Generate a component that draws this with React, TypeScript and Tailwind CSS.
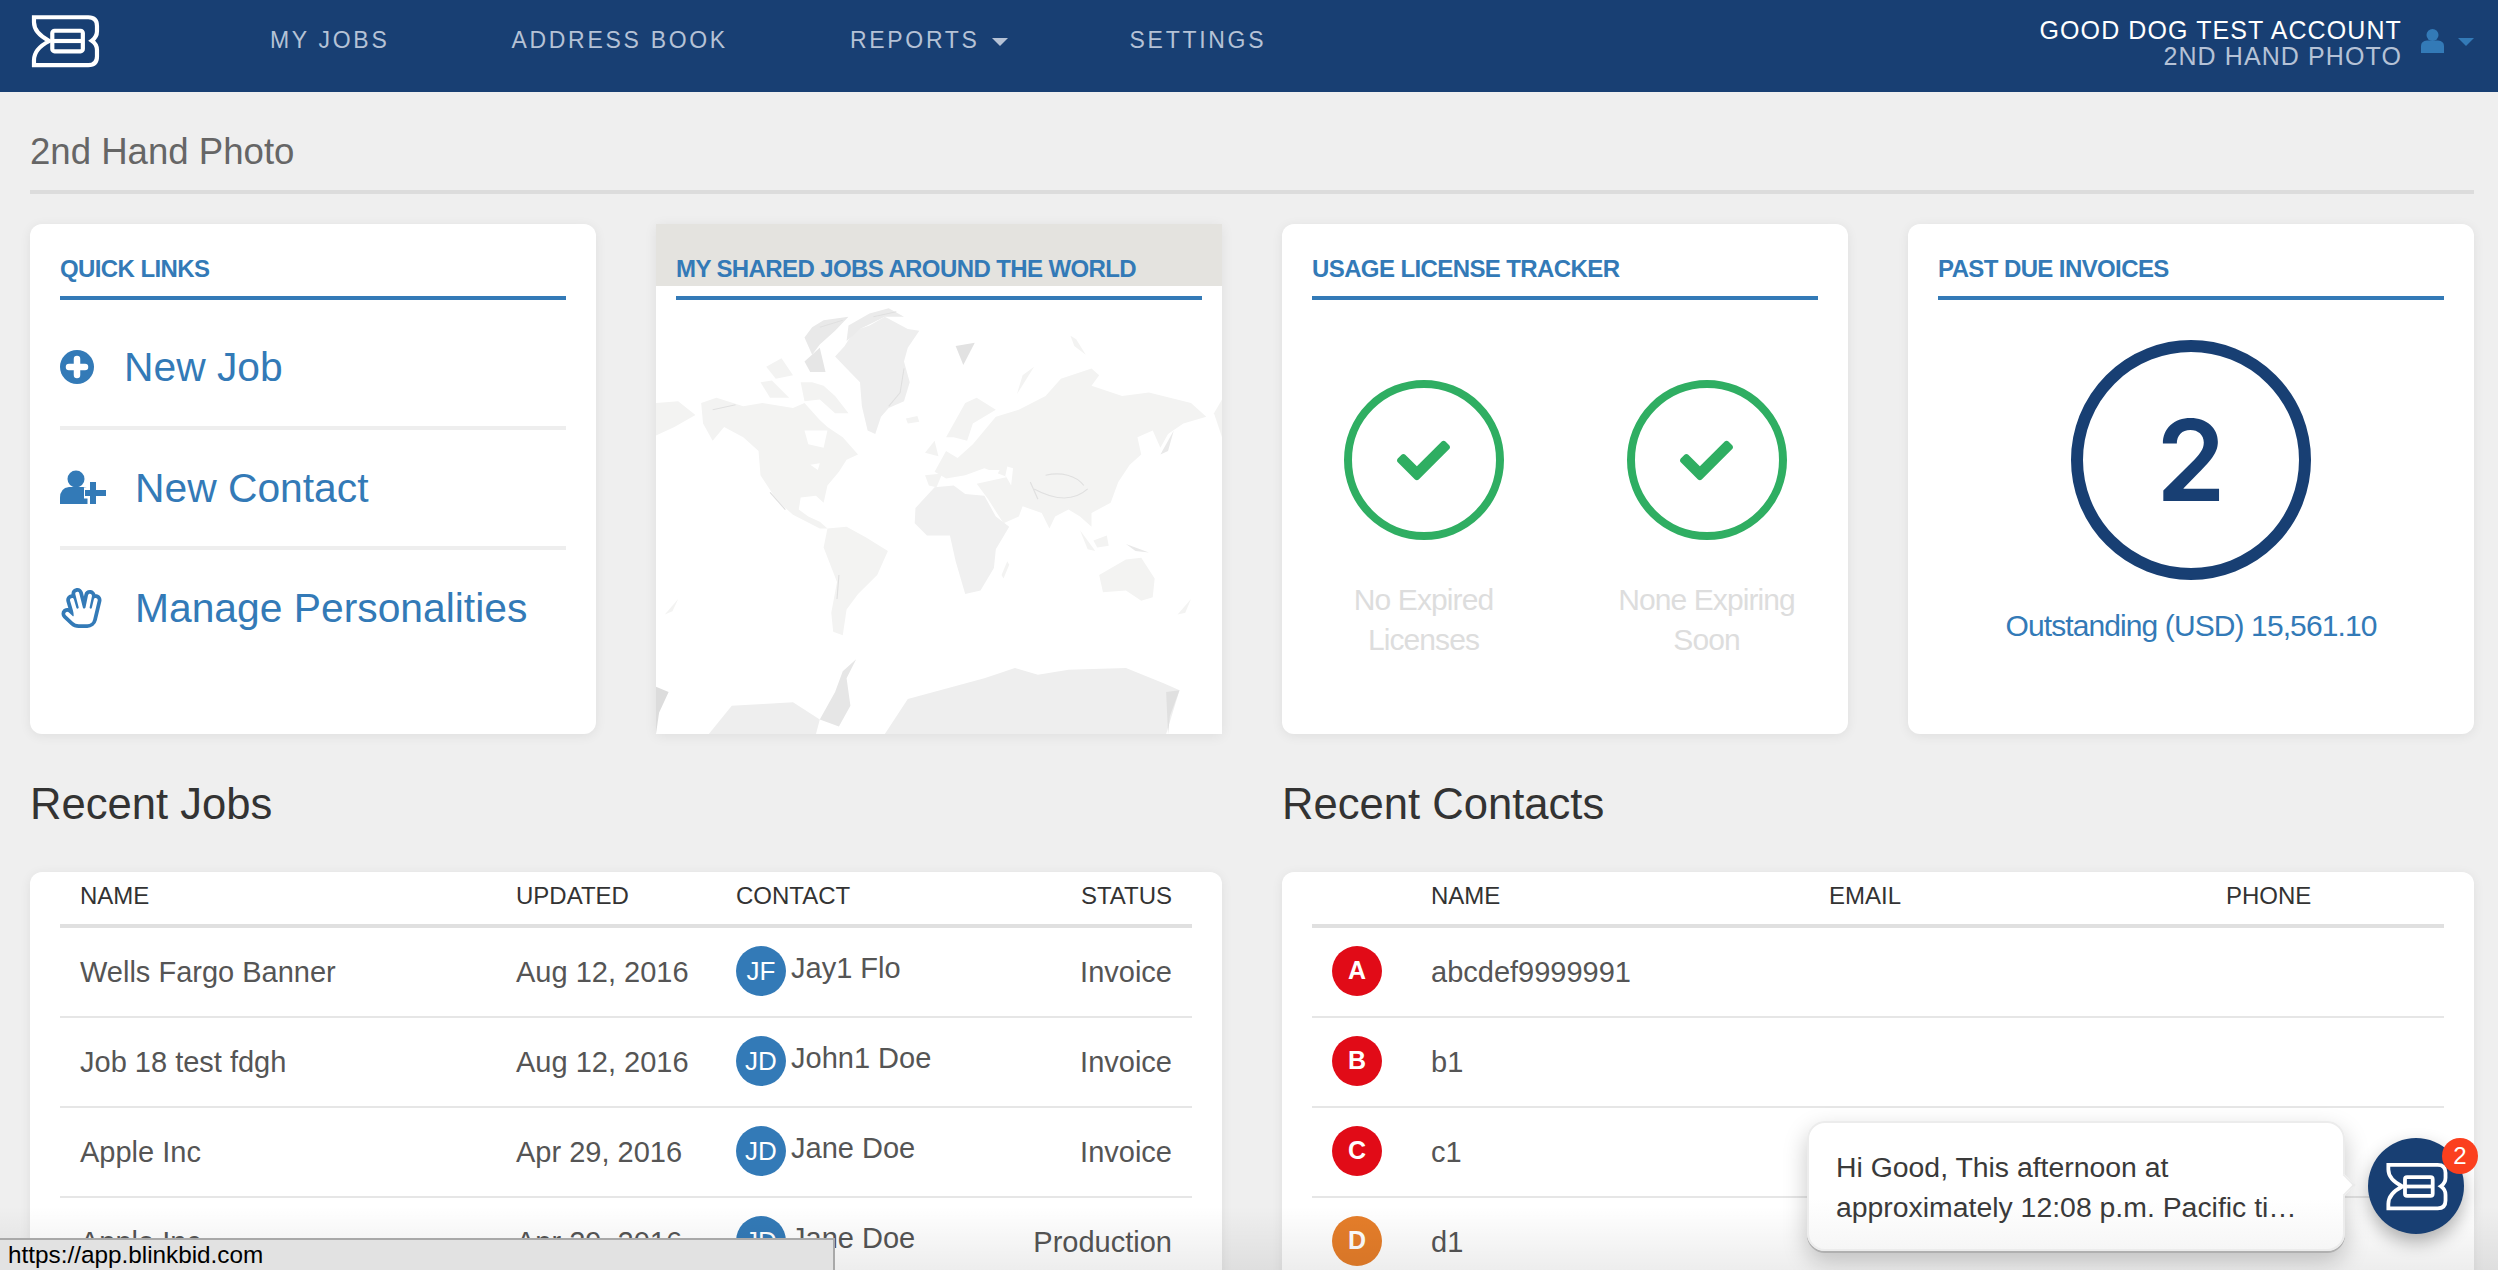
import { FaCheck, FaRegHandSpock } from "react-icons/fa";

function Logo({ className }: { className: string }) {
  return (
    <svg viewBox="25 8 215 168" className={className} fill="none" stroke="white" strokeWidth="13">
      <path d="M36 18H205Q232 18 232 45V62Q232 80 216 91Q232 102 232 120V140Q232 167 205 167H36V152Q36 116 84 92Q36 68 36 34Z" />
      <rect x="93" y="60" width="95" height="64" rx="7" />
      <path d="M93 92H188" />
    </svg>
  );
}

function PlusCircle() {
  return (
    <svg viewBox="0 0 34 34" className="w-[34px] h-[34px] shrink-0">
      <circle cx="17" cy="17" r="17" fill="#337ab7" />
      <path d="M17 9V25M9 17H25" stroke="white" strokeWidth="6.5" strokeLinecap="round" />
    </svg>
  );
}

function UserPlus() {
  return (
    <svg viewBox="0 0 46 36" className="w-[46px] h-[36px] shrink-0">
      <circle cx="16" cy="9" r="8.5" fill="#337ab7" />
      <path d="M0 34V28Q0 18 9 17H23Q30 18 32 24V34Z" fill="#337ab7" />
      <path d="M33 11V35M24 23H46" stroke="white" strokeWidth="11" />
      <path d="M33 12V34M25 23H46" stroke="#337ab7" strokeWidth="6" />
    </svg>
  );
}

function CardTitle({ children }: { children: string }) {
  return (
    <div className="mx-[30px] pt-[30px] pb-[12px] border-b-4 border-[#337ab7] text-[24px] leading-[30px] font-bold tracking-[-0.6px] text-[#337ab7]">
      {children}
    </div>
  );
}

function QuickLink({ icon, label, className }: { icon: React.ReactNode; label: string; className: string }) {
  return (
    <div className={`flex items-center text-[40.8px] text-[#337ab7] ${className}`}>
      {icon}
      <span className="mt-[2px]">{label}</span>
    </div>
  );
}

function Check() {
  return (
    <div className="w-[160px] h-[160px] rounded-full border-8 border-[#2fae62] flex items-center justify-center">
      <FaCheck className="w-[53px] h-[53px] text-[#2fae62]" />
    </div>
  );
}

// coordinates are traced off the map picture, hence the odd viewBox
function WorldMap() {
  return (
    <svg viewBox="42 261 1479 1261" preserveAspectRatio="none" className="block w-full h-[434px]">
      <defs>
        <filter id="soft" x="-5%" y="-5%" width="110%" height="110%">
          <feGaussianBlur stdDeviation="2" />
        </filter>
      </defs>
      <g fill="#f3f3f2" filter="url(#soft)">
        <path d="M510,425 L535,395 L560,350 L600,335 L640,310 L700,345 L730,350 L700,400 L690,440 L705,500 L690,555 L650,575 L630,600 L615,650 L595,640 L580,570 L575,500 L540,460 Z" fill="#eeeeee" />
        <path d="M430,370 L450,340 L480,320 L545,310 L510,350 L470,390 L450,420 Z" fill="#e9e9e9" />
        <path d="M545,335 L600,300 L650,285 L690,310 L640,310 L575,345 L540,380 Z" fill="#ebebeb" />
        <path d="M315,500 L345,495 L390,545 L340,545 Z" />
        <path d="M330,455 L370,430 L400,480 L355,490 Z" />
        <path d="M420,500 L450,500 L480,510 L510,540 L545,590 L510,590 L470,550 L430,555 Z" />
        <path d="M430,440 L470,400 L485,470 L445,470 Z" fill="#e6e6e6" />
        <path d="M160,560 L200,545 L270,570 L320,560 L400,575 L430,560 L470,610 L490,630 L530,660 L570,710 L540,725 L520,760 L490,800 L480,850 L460,830 L420,835 L415,870 L440,890 L470,905 L490,925 L470,925 L400,885 L375,860 L350,830 L315,770 L310,700 L270,660 L220,630 L190,670 L165,620 Z" />
        <path d="M490,925 L540,920 L590,950 L648,990 L620,1060 L570,1115 L540,1160 L530,1235 L505,1225 L500,1170 L515,1080 L480,980 Z" />
        <path d="M720,865 L770,805 L820,800 L850,825 L900,830 L930,890 L965,920 L930,985 L925,1040 L890,1105 L850,1115 L825,1020 L810,945 L750,945 L718,910 Z" fill="#f0f0f0" />
        <path d="M770,760 L800,700 L830,720 L870,680 L930,600 L990,580 L1060,540 L1100,490 L1180,460 L1200,480 L1180,510 L1260,540 L1330,530 L1440,560 L1480,600 L1420,620 L1380,650 L1360,690 L1340,640 L1300,660 L1310,710 L1280,740 L1250,790 L1230,850 L1180,880 L1180,920 L1150,890 L1120,870 L1085,890 L1070,925 L1050,880 L1000,860 L990,890 L950,910 L910,840 L880,795 L960,775 L900,750 L850,770 L800,780 Z" />
        <path d="M800,660 L850,560 L880,545 L930,580 L870,620 L855,670 L820,660 Z" />
        <path d="M745,705 L770,670 L780,715 Z" />
        <path d="M695,605 L725,598 L730,615 L700,620 Z" />
        <path d="M745,770 L790,765 L775,805 L755,800 Z" />
        <path d="M1150,930 L1190,990 L1170,985 Z" />
        <path d="M1185,960 L1220,945 L1225,975 L1195,980 Z" />
        <path d="M1270,970 L1330,995 L1295,990 Z" fill="#e9e9e9" />
        <path d="M1200,1060 L1270,1015 L1310,1010 L1345,1070 L1340,1125 L1310,1135 L1270,1105 L1210,1110 Z" />
        <path d="M945,1060 L960,1020 L965,1030 L950,1070 Z" />
        <path d="M1405,1175 L1440,1130 L1425,1170 Z" />
        <path d="M65,1175 L100,1130 L85,1165 Z" />
        <path d="M1360,710 L1395,640 L1380,700 Z" fill="#e9e9e9" />
        <path d="M42,560 L100,555 L145,595 L90,630 L42,655 Z" />
        <path d="M1500,590 L1521,550 L1521,660 Z" />
        <path d="M825,395 L875,385 L845,450 Z" fill="#e2e2e2" />
        <path d="M985,535 L1030,455 L1000,480 Z" />
        <path d="M1125,365 L1140,375 L1165,420 L1135,395 Z" />
        <path d="M640,1522 L700,1420 L900,1360 L980,1330 L1040,1350 L1120,1335 L1270,1330 L1370,1375 L1410,1395 L1375,1522 Z" fill="#eeeeee" />
        <path d="M180,1522 L240,1440 L400,1430 L470,1480 L460,1522 Z" fill="#eeeeee" />
        <path d="M470,1480 L510,1400 L530,1340 L565,1305 L540,1360 L550,1440 L520,1500 Z" fill="#e6e6e6" />
        <path d="M42,1385 L75,1400 L50,1460 L42,1522 Z" fill="#dcdcdc" />
        <path d="M1375,1400 L1410,1395 L1385,1470 L1380,1522 Z" fill="#e0e0e0" />
      </g>
      <g fill="white">
        <path d="M430,640 L490,640 L480,690 L440,680 Z" />
        <path d="M445,740 L470,735 L465,755 Z" />
        <path d="M960,745 L975,750 L970,800 L955,770 Z" />
        <path d="M885,755 L940,755 L930,775 L890,780 Z" />
      </g>
      <g fill="none" stroke="#e0e0e0" strokeWidth="3" filter="url(#soft)">
        <path d="M1030,810 C1080,840 1130,850 1170,810" />
        <path d="M1060,770 C1100,760 1140,770 1160,800" />
        <path d="M520,1060 L515,1130" />
        <path d="M690,460 L680,530 L650,570" />
        <path d="M190,580 L250,565" />
        <path d="M340,820 L380,870" />
        <path d="M470,340 L530,320" />
        <path d="M610,310 L670,295" />
        <path d="M1020,790 L1040,840" />
      </g>
    </svg>
  );
}

const jobs = [
  { name: "Wells Fargo Banner", updated: "Aug 12, 2016", initials: "JF", contact: "Jay1 Flo", status: "Invoice" },
  { name: "Job 18 test fdgh", updated: "Aug 12, 2016", initials: "JD", contact: "John1 Doe", status: "Invoice" },
  { name: "Apple Inc", updated: "Apr 29, 2016", initials: "JD", contact: "Jane Doe", status: "Invoice" },
  { name: "Apple Inc", updated: "Apr 29, 2016", initials: "JD", contact: "Jane Doe", status: "Production" },
];

const contacts = [
  { letter: "A", name: "abcdef9999991", color: "bg-[#e10b17]" },
  { letter: "B", name: "b1", color: "bg-[#e10b17]" },
  { letter: "C", name: "c1", color: "bg-[#e10b17]" },
  { letter: "D", name: "d1", color: "bg-[#e67e2a]" },
];

const headCell = "text-[24px] text-[#333]";
const cardClass = "bg-white rounded-xl shadow-[0_2px_12px_rgba(0,0,0,0.07)] h-[510px]";

export default function App() {
  return (
    <div className="relative h-[1270px] overflow-hidden bg-[#efefef] font-['Liberation_Sans',sans-serif]">
      <header className="h-[92px] bg-[#183f73] flex items-center pl-[30px] pr-[24px] pb-[10px]">
        <Logo className="w-[70px] h-[54px]" />
        <nav className="ml-[170px] -mt-[1px] flex items-center gap-[122px] text-[23px] tracking-[2.7px] text-[#b5c2d6]">
          <span>MY JOBS</span>
          <span>ADDRESS BOOK</span>
          <span className="flex items-center">
            REPORTS
            <span className="ml-[12px] mt-[3px] border-x-[8px] border-x-transparent border-t-[8px] border-t-[#b5c2d6]" />
          </span>
          <span>SETTINGS</span>
        </nav>
        <div className="ml-auto flex items-center">
          <div className="mt-[3px] text-right text-[25px] leading-[26px] tracking-[1.1px]">
            <div className="text-white">GOOD DOG TEST ACCOUNT</div>
            <div className="text-[#b5c2d6]">2ND HAND PHOTO</div>
          </div>
          <svg viewBox="0 0 23 24" className="w-[23px] h-[24px] ml-[19px]">
            <circle cx="11.5" cy="6" r="6" fill="#337ab7" />
            <path d="M0 24V17Q0 12 6 11.5H17Q23 12 23 17V24Z" fill="#337ab7" />
          </svg>
          <span className="ml-[14px] mt-[2px] border-x-[8px] border-x-transparent border-t-[8px] border-t-[#337ab7]" />
        </div>
      </header>

      <main className="pl-[30px] pr-[24px]">
        <div className="h-[102px] pt-[40px] border-b-4 border-[#dcdcdc] text-[36.6px] leading-[40px] text-[#666]">2nd Hand Photo</div>

        <div className="mt-[30px] grid grid-cols-4 gap-[60px]">
          <section className={cardClass}>
            <CardTitle>QUICK LINKS</CardTitle>
            <div className="mx-[30px] mt-[8px]">
              <QuickLink className="h-[122px] gap-[30px] border-b-4 border-[#eeeeee]" icon={<PlusCircle />} label="New Job" />
              <QuickLink className="h-[120px] gap-[29px] border-b-4 border-[#eeeeee]" icon={<UserPlus />} label="New Contact" />
              <QuickLink className="h-[116px] gap-[32px]" icon={<FaRegHandSpock className="w-[43px] h-[40px] shrink-0" />} label="Manage Personalities" />
            </div>
          </section>

          <section className="bg-white shadow-[0_2px_12px_rgba(0,0,0,0.07)] h-[510px] overflow-hidden">
            <div className="h-[62px] bg-[#e4e3df] px-[20px] pt-[30px] text-[24px] leading-[30px] font-bold tracking-[-0.6px] text-[#337ab7]">
              MY SHARED JOBS AROUND THE WORLD
            </div>
            <div className="mx-[20px] mt-[10px] h-[4px] bg-[#337ab7]" />
            <WorldMap />
          </section>

          <section className={cardClass}>
            <CardTitle>USAGE LICENSE TRACKER</CardTitle>
            <div className="grid grid-cols-2 mt-[80px] text-[30px] leading-[40px] tracking-[-0.9px] text-[#dddddd] text-center">
              <div className="flex flex-col items-center">
                <Check />
                <div className="mt-[40px]">No Expired<br />Licenses</div>
              </div>
              <div className="flex flex-col items-center">
                <Check />
                <div className="mt-[40px]">None Expiring<br />Soon</div>
              </div>
            </div>
          </section>

          <section className={cardClass}>
            <CardTitle>PAST DUE INVOICES</CardTitle>
            <div className="flex flex-col items-center mt-[40px]">
              <div className="w-[240px] h-[240px] rounded-full border-[12px] border-[#183f73] flex items-center justify-center text-[112px] font-semibold text-[#183f73] font-['Inter',sans-serif]">
                2
              </div>
              <div className="mt-[26px] text-[30px] leading-[40px] tracking-[-0.9px] text-[#337ab7]">Outstanding (USD) 15,561.10</div>
            </div>
          </section>
        </div>

        <div className="grid grid-cols-2 gap-[60px]">
          <div>
            <h2 className="pt-[45px] pb-[43px] text-[43.6px] leading-[50px] text-[#333]">Recent Jobs</h2>
            <section className="bg-white rounded-xl px-[30px] h-[500px] shadow-[0_2px_12px_rgba(0,0,0,0.07)]">
              <div className="h-[56px] pb-[4px] border-b-4 border-[#e0e0e0] pl-[20px] pr-[20px] grid grid-cols-[436px_220px_1fr_auto] items-center">
                <span className={headCell}>NAME</span>
                <span className={headCell}>UPDATED</span>
                <span className={headCell}>CONTACT</span>
                <span className={headCell}>STATUS</span>
              </div>
              {jobs.map((job, i) => (
                <div key={i} className="h-[90px] border-b-2 border-[#e6e6e6] pl-[20px] pr-[20px] grid grid-cols-[436px_220px_1fr_auto] items-center text-[29px] text-[#555]">
                  <span className="mt-[2px]">{job.name}</span>
                  <span className="mt-[2px]">{job.updated}</span>
                  <span className="flex items-center gap-[5px]">
                    <span className="w-[50px] h-[50px] -mt-[2px] rounded-full bg-[#337ab7] text-white text-[26px] flex items-center justify-center">{job.initials}</span>
                    <span className="-mt-[6px]">{job.contact}</span>
                  </span>
                  <span className="mt-[2px]">{job.status}</span>
                </div>
              ))}
            </section>
          </div>

          <div>
            <h2 className="pt-[45px] pb-[43px] text-[43.6px] leading-[50px] text-[#333]">Recent Contacts</h2>
            <section className="bg-white rounded-xl px-[30px] h-[500px] shadow-[0_2px_12px_rgba(0,0,0,0.07)]">
              <div className="h-[56px] pb-[4px] border-b-4 border-[#e0e0e0] pl-[20px] grid grid-cols-[99px_398px_397px_1fr] items-center">
                <span />
                <span className={headCell}>NAME</span>
                <span className={headCell}>EMAIL</span>
                <span className={headCell}>PHONE</span>
              </div>
              {contacts.map((c) => (
                <div key={c.letter} className="h-[90px] border-b-2 border-[#e6e6e6] pl-[20px] grid grid-cols-[99px_1fr] items-center text-[29px] text-[#555]">
                  <span className={`w-[50px] h-[50px] -mt-[2px] rounded-full text-white text-[25px] font-bold flex items-center justify-center ${c.color}`}>{c.letter}</span>
                  <span className="mt-[2px]">{c.name}</span>
                </div>
              ))}
            </section>
          </div>
        </div>
      </main>

      <div className="absolute inset-x-0 bottom-0 h-[64px] bg-gradient-to-b from-black/0 to-black/[.07] pointer-events-none" />

      <div className="absolute left-0 bottom-0 w-[835px] h-[32px] bg-[#e2e2e2] border-t-2 border-r-2 border-[#a9a9a9] pl-[8px] text-[24.3px] leading-[30px] text-black">
        https://app.blinkbid.com
      </div>

      <div className="absolute left-[1807px] top-[1121px] w-[538px] h-[130px] rounded-[18px] bg-gradient-to-b from-white from-60% to-[#f6f6f6] border-2 border-[#ececec] shadow-[0_2px_0_#b0b0b0,0_10px_24px_rgba(0,0,0,0.22)] pl-[27px] pt-[24px] text-[28.4px] leading-[40px] text-[#3a3a3a]">
        <div>Hi Good, This afternoon at</div>
        <div>approximately 12:08 p.m. Pacific ti…</div>
        <span className="absolute -right-[9px] top-[54px] w-[16px] h-[16px] rotate-45 bg-white border-t-2 border-r-2 border-[#ececec]" />
      </div>

      <div className="absolute left-[2368px] top-[1138px] w-[96px] h-[96px] rounded-full bg-[#183f73] shadow-[0_8px_18px_rgba(0,0,0,0.3)] flex items-center justify-center">
        <Logo className="w-[63px] h-[49px]" />
        <span className="absolute -right-[14px] top-0 w-[36px] h-[36px] rounded-full bg-[#fb3f1e] text-white text-[24px] flex items-center justify-center">2</span>
      </div>
    </div>
  );
}
